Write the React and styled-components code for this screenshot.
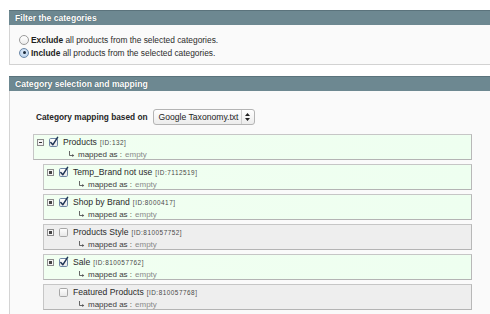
import React from "react";
import styled, { createGlobalStyle } from "styled-components";

const Global = createGlobalStyle`
  html, body { margin: 0; padding: 0; background: #ffffff; }
  body { font-family: "Liberation Sans", Arial, sans-serif; color: #2c2c2c; }
`;

const Page = styled.div`
  width: 490px;
  height: 314px;
  overflow: hidden;
  padding: 10px 0 0 9px;
  box-sizing: border-box;
`;

const Section = styled.section`
  & + & { margin-top: 11px; }
`;

const Header = styled.div`
  height: 15px;
  line-height: 15px;
  box-sizing: border-box;
  background: #6d8891;
  border-top: 1px solid #5b737c;
  padding-left: 6px;
  color: #ffffff;
  font-weight: bold;
  font-size: 8.6px;
  text-shadow: 0 0 1px rgba(40, 55, 60, 0.7);
`;

const Body = styled.div`
  background: #fafafa;
  border-left: 1px solid #d4d4d4;
  border-bottom: 1px solid #d2d2d2;
  padding: ${(p) => p.$pad};
`;

const RadioRow = styled.label`
  display: flex;
  align-items: center;
  height: 13px;
  gap: 2px;
  font-size: 8.4px;
  color: #2c2c2c;
  b { font-weight: bold; color: #1e1e1e; }
`;

const RadioDot = styled.span`
  width: 10px;
  height: 10px;
  box-sizing: border-box;
  border-radius: 50%;
  border: 1px solid ${(p) => (p.$on ? "#6b88a8" : "#9a9a9a")};
  background: ${(p) =>
    p.$on
      ? "radial-gradient(circle at 50% 40%, #e8f1fb 0%, #a9c6e6 100%)"
      : "linear-gradient(#ffffff, #ececec)"};
  display: flex;
  align-items: center;
  justify-content: center;
  &::after {
    content: "";
    width: 3px;
    height: 3px;
    border-radius: 50%;
    background: ${(p) => (p.$on ? "#1a2a3c" : "transparent")};
  }
`;

const MapRow = styled.div`
  display: flex;
  align-items: center;
  gap: 5px;
  height: 16px;
  margin-left: 3px;
  font-size: 8.3px;
  font-weight: bold;
  color: #262626;
`;

const Select = styled.div`
  display: flex;
  align-items: center;
  height: 16px;
  width: 102px;
  box-sizing: border-box;
  border: 1px solid #b4b4b4;
  border-radius: 3px;
  background: linear-gradient(#ffffff, #ececec);
  font-weight: normal;
  font-size: 8.6px;
  color: #1e1e1e;
  span { flex: 1; padding-left: 5px; }
`;

const SelectArrows = styled.div`
  width: 12px;
  height: 100%;
  border-left: 1px solid #cfcfcf;
  display: flex;
  align-items: center;
  justify-content: center;
`;

const Tree = styled.div`
  display: flex;
  flex-direction: column;
  gap: 4px;
  margin-top: 9px;
`;

const Node = styled.div`
  height: 26px;
  box-sizing: border-box;
  margin-left: ${(p) => p.$indent}px;
  border: 1px solid #c6c6c6;
  border-bottom-color: #b4b4b4;
  border-right-color: #b8b8b8;
  background: ${(p) =>
    p.$checked ? "linear-gradient(90deg, #f1fff1, #eefff0)" : "#eeeeee"};
  padding: 1px 0 0 3px;
`;

const Line = styled.div`
  display: flex;
  align-items: center;
  height: 12px;
`;

const Expander = styled.span`
  width: 7px;
  height: 7px;
  display: flex;
  margin-right: 5px;
`;

const Name = styled.span`
  margin-left: 5px;
  font-size: 8.6px;
  color: #2a2a2a;
`;

const Id = styled.span`
  margin-left: 3px;
  font-size: 6.4px;
  letter-spacing: 0.5px;
  color: #4a4a4a;
`;

const Mapped = styled.div`
  height: 13px;
  display: flex;
  align-items: center;
  margin-left: 31px;
  font-size: 8px;
  color: #3a3a3a;
  svg { margin-right: 3px; }
`;

const Empty = styled.span`
  color: #8a8a8a;
  margin-left: 3px;
`;

function ExpanderIcon({ type }) {
  if (!type) return <Expander />;
  return (
    <Expander>
      <svg width="7" height="7" viewBox="0 0 7 7">
        <rect x="0.5" y="0.5" width="6" height="6" fill="#f4f4f4" stroke="#8c8c8c" />
        {type === "minus" ? (
          <rect x="2" y="3" width="3" height="1" fill="#333" />
        ) : (
          <rect x="2" y="2" width="3" height="3" fill="#444" />
        )}
      </svg>
    </Expander>
  );
}

function Check({ on }) {
  return (
    <svg width="9" height="9" viewBox="0 0 9 9" style={{ overflow: "visible" }}>
      <defs>
        <linearGradient id="cbg" x1="0" y1="0" x2="0" y2="1">
          <stop offset="0" stopColor="#ffffff" />
          <stop offset="1" stopColor="#e6e6e6" />
        </linearGradient>
      </defs>
      <rect x="0.5" y="0.5" width="8" height="8" rx="1.2" fill="url(#cbg)" stroke={on ? "#6f87a6" : "#a6a6a6"} />
      {on && (
        <path d="M1.8 4.6 L3.8 6.8 L8.6 -0.6" fill="none" stroke="#1f3556" strokeWidth="1.5" strokeLinecap="round" strokeLinejoin="round" />
      )}
    </svg>
  );
}

function MapArrow() {
  return (
    <svg width="7" height="7" viewBox="0 0 7 7">
      <path d="M1.5 0 V4.5 H5.5" fill="none" stroke="#555" strokeWidth="0.9" />
      <path d="M4.2 3 L6.2 4.5 L4.2 6 Z" fill="#555" />
    </svg>
  );
}

const nodes = [
  { name: "Products", id: "132", indent: 0, checked: true, exp: "minus" },
  { name: "Temp_Brand not use", id: "7112519", indent: 10, checked: true, exp: "plus" },
  { name: "Shop by Brand", id: "8000417", indent: 10, checked: true, exp: "plus" },
  { name: "Products Style", id: "810057752", indent: 10, checked: false, exp: "plus" },
  { name: "Sale", id: "810057762", indent: 10, checked: true, exp: "plus" },
  { name: "Featured Products", id: "810057768", indent: 10, checked: false, exp: null },
];

export default function App() {
  return (
    <Page>
      <Global />
      <Section>
        <Header>Filter the categories</Header>
        <Body $pad="8px 0 5px 9px">
          <RadioRow>
            <RadioDot />
            <span><b>Exclude</b> all products from the selected categories.</span>
          </RadioRow>
          <RadioRow>
            <RadioDot $on />
            <span><b>Include</b> all products from the selected categories.</span>
          </RadioRow>
        </Body>
      </Section>
      <Section>
        <Header>Category selection and mapping</Header>
        <Body $pad="18px 18px 20px 23px">
          <MapRow>
            Category mapping based on
            <Select>
              <span>Google Taxonomy.txt</span>
              <SelectArrows>
                <svg width="5" height="8" viewBox="0 0 5 8">
                  <path d="M2.5 0 L5 3 L0 3 Z M2.5 8 L5 5 L0 5 Z" fill="#222" />
                </svg>
              </SelectArrows>
            </Select>
          </MapRow>
          <Tree>
            {nodes.map((n) => (
              <Node key={n.id} $indent={n.indent} $checked={n.checked}>
                <Line>
                  <ExpanderIcon type={n.exp} />
                  <Check on={n.checked} />
                  <Name>{n.name}</Name>
                  <Id>[ID:{n.id}]</Id>
                </Line>
                <Mapped>
                  <MapArrow />
                  mapped as :
                  <Empty>empty</Empty>
                </Mapped>
              </Node>
            ))}
          </Tree>
        </Body>
      </Section>
    </Page>
  );
}
